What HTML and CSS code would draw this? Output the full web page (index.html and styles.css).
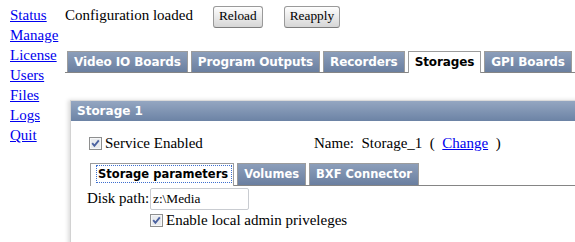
FILE: index.html
```html
<!DOCTYPE html>
<html>
<head>
<meta charset="utf-8">
<link rel="stylesheet" href="styles.css">
</head>
<body>
<div class="page">
  <nav class="nav">
    <a href="#">Status</a>
    <a href="#">Manage</a>
    <a href="#">License</a>
    <a href="#">Users</a>
    <a href="#">Files</a>
    <a href="#">Logs</a>
    <a href="#">Quit</a>
  </nav>
  <main class="main">
    <div class="topbar">
      <span class="status">Configuration loaded</span>
      <button class="btn btn-reload">Reload</button>
      <button class="btn btn-reapply">Reapply</button>
    </div>
    <div class="tabs">
      <div class="tab">Video IO Boards</div>
      <div class="tab">Program Outputs</div>
      <div class="tab">Recorders</div>
      <div class="tab active">Storages</div>
      <div class="tab">GPI Boards</div>
    </div>
    <section class="panel">
      <div class="panel-head">Storage 1</div>
      <div class="panel-body">
        <div class="service-row">
          <div class="service-cell"><svg class="cb" width="13" height="13" viewBox="0 0 13 13"><rect x="0.5" y="0.5" width="12" height="12" fill="#e9ebee" stroke="#8e8f8f"/><rect x="1.5" y="1.5" width="10" height="10" fill="none" stroke="#f6f7f8"/><path d="M3.2 6.2 L5.4 8.8 L9.8 3.4" fill="none" stroke="#4b62a0" stroke-width="1.9"/></svg>Service Enabled</div>
          <div class="name-cell">Name:&nbsp; Storage_1 &nbsp;(&nbsp; <a href="#">Change</a>&nbsp; )</div>
        </div>
        <div class="subtabs">
          <div class="subtab active"><span class="focus">Storage parameters</span></div>
          <div class="subtab">Volumes</div>
          <div class="subtab">BXF Connector</div>
        </div>
        <div class="form">
          <label class="lbl">Disk path:</label>
          <input class="txt" type="text" value="z:\Media">
          <div class="chk-row"><svg class="cb" width="13" height="13" viewBox="0 0 13 13"><rect x="0.5" y="0.5" width="12" height="12" fill="#e9ebee" stroke="#8e8f8f"/><rect x="1.5" y="1.5" width="10" height="10" fill="none" stroke="#f6f7f8"/><path d="M3.2 6.2 L5.4 8.8 L9.8 3.4" fill="none" stroke="#4b62a0" stroke-width="1.9"/></svg>Enable local admin priveleges</div>
        </div>
      </div>
    </section>
  </main>
</div>
</body>
</html>
```
FILE: styles.css
```css
html, body {
  margin: 0;
  padding: 0;
  background: #fff;
}
body {
  font-family: "Liberation Serif", "Times New Roman", serif;
  font-size: 15px;
  color: #000;
  overflow: hidden;
}
a {
  color: #0000ee;
  text-decoration: underline;
}
.page {
  display: flex;
  align-items: flex-start;
  width: 575px;
  height: 242px;
  overflow: hidden;
}
.nav {
  width: 65px;
  flex: none;
  box-sizing: border-box;
  padding: 5px 0 0 10px;
  display: flex;
  flex-direction: column;
  align-items: flex-start;
  line-height: 20px;
}
.main {
  flex: 1;
  min-width: 0;
  padding-top: 5px;
}
.topbar {
  display: flex;
  align-items: baseline;
  line-height: 20px;
}
.btn {
  font-family: "Liberation Serif", "Times New Roman", serif;
  font-size: 13.33px;
  height: 22px;
  line-height: 18px;
  padding: 0 5px 2px;
  box-sizing: border-box;
  border: 1px solid #9a9a9a;
  border-bottom-color: #7d7d7d;
  border-radius: 3px;
  background: linear-gradient(#fefefe, #e6e6e6 60%, #d6d6d6);
  color: #000;
}
.btn-reload { margin-left: 20px; }
.btn-reapply { margin-left: 21px; }

.tabs {
  display: flex;
  align-items: flex-start;
  gap: 3px;
  margin-top: 23px;
  padding-left: 2px;
  border-bottom: 1px solid #858585;
}
.tab, .subtab {
  font-family: "DejaVu Sans", Verdana, sans-serif;
  font-weight: bold;
  font-size: 12px;
  letter-spacing: -0.1px;
  line-height: 20px;
  height: 21px;
  box-sizing: border-box;
  padding: 0 6px;
  border: 1px solid #9c9c9c;
  border-bottom: 0;
  color: #fff;
  background: linear-gradient(#8c9eba, #6a7fa0);
  white-space: nowrap;
}
.tab.active {
  height: 22px;
  margin-bottom: -1px;
  background: #fff;
  color: #000;
}
.panel {
  margin: 27px -20px 0 5px;
  border-top: 1px solid #dadada;
  border-left: 1px solid #d2d2d2;
  box-shadow: -2px 0 4px rgba(0, 0, 0, 0.14);
  height: 200px;
}
.panel-head {
  height: 20px;
  line-height: 20px;
  padding-left: 6px;
  font-family: "DejaVu Sans", Verdana, sans-serif;
  font-weight: bold;
  font-size: 12px;
  color: #fff;
  background: linear-gradient(#94a6c1, #6c83a5);
}
.panel-body {
  padding: 12px 0 0 16px;
}
.service-row {
  display: flex;
  line-height: 20px;
}
.service-cell {
  width: 227px;
  flex: none;
}
.cb {
  vertical-align: -2px;
  margin-right: 3px;
}
.service-cell .cb {
  margin-left: 2px;
}
.subtabs {
  display: flex;
  align-items: flex-start;
  gap: 3px;
  margin: 10px 0 0 3px;
  border-bottom: 1px solid #858585;
}
.subtab {
  height: 22px;
  font-size: 11.5px;
  letter-spacing: 0;
  line-height: 21px;
}
.subtab.active {
  height: 23px;
  margin-bottom: -1px;
  padding: 0 1px 0 5px;
  background: #fff;
  color: #000;
}
.focus {
  display: inline-block;
  line-height: 18px;
  padding: 0 4px 0 2px;
  outline: 1px dotted #3d6fcf;
  outline-offset: -1px;
}
.form {
  display: grid;
  grid-template-columns: 63px auto;
  justify-content: start;
  align-items: baseline;
  margin-top: 2px;
  line-height: 20px;
}
.lbl {
  white-space: nowrap;
}
.txt {
  width: 99px;
  height: 22px;
  box-sizing: border-box;
  border: 1px solid #c9ccd1;
  border-radius: 2px;
  padding: 0 2px;
  font-family: "Liberation Serif", "Times New Roman", serif;
  font-size: 13.33px;
  color: #000;
}
.chk-row {
  grid-column: 2;
}
```
